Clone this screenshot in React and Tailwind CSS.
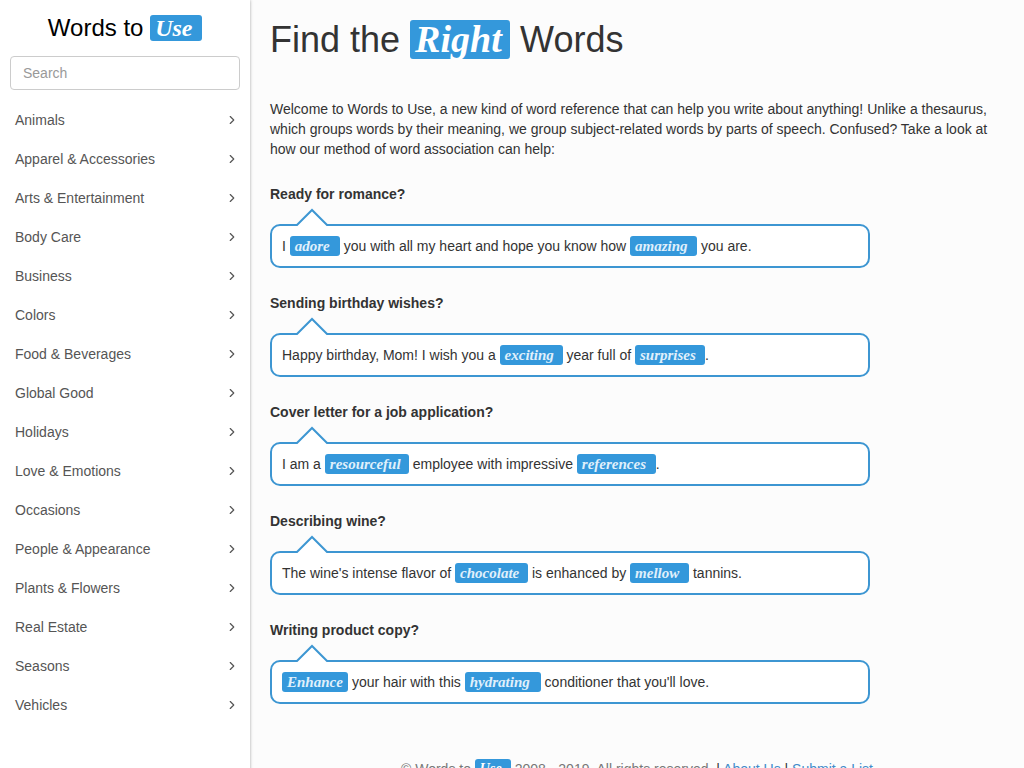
import { ChevronRight } from 'lucide-react'
import clsx from 'clsx'

const categories = [
  'Animals',
  'Apparel & Accessories',
  'Arts & Entertainment',
  'Body Care',
  'Business',
  'Colors',
  'Food & Beverages',
  'Global Good',
  'Holidays',
  'Love & Emotions',
  'Occasions',
  'People & Appearance',
  'Plants & Flowers',
  'Real Estate',
  'Seasons',
  'Vehicles',
]

// Strings are plain text, objects are highlighted words
const examples = [
  {
    title: 'Ready for romance?',
    parts: [
      'I ',
      { word: 'adore', width: 'w-[50px]' },
      ' you with all my heart and hope you know how ',
      { word: 'amazing', width: 'w-[67px]' },
      ' you are.',
    ],
  },
  {
    title: 'Sending birthday wishes?',
    parts: [
      'Happy birthday, Mom! I wish you a ',
      { word: 'exciting', width: 'w-[63px]' },
      ' year full of ',
      { word: 'surprises', width: 'w-[70px]' },
      '.',
    ],
  },
  {
    title: 'Cover letter for a job application?',
    parts: [
      'I am a ',
      { word: 'resourceful', width: 'w-[84px]' },
      ' employee with impressive ',
      { word: 'references', width: 'w-[79px]' },
      '.',
    ],
  },
  {
    title: 'Describing wine?',
    parts: [
      "The wine's intense flavor of ",
      { word: 'chocolate', width: 'w-[73px]' },
      ' is enhanced by ',
      { word: 'mellow', width: 'w-[59px]' },
      ' tannins.',
    ],
  },
  {
    title: 'Writing product copy?',
    parts: [
      { word: 'Enhance', width: 'w-[66px]' },
      ' your hair with this ',
      { word: 'hydrating', width: 'w-[76px]' },
      " conditioner that you'll love.",
    ],
  },
]

function Word({ className, children }) {
  return (
    <span
      className={clsx(
        "inline-block whitespace-nowrap rounded-[3px] bg-[#3498db] pl-[5px] text-left align-top font-['Liberation_Serif',serif] font-bold italic",
        className
      )}
    >
      {children}
    </span>
  )
}

function Example({ title, parts }) {
  return (
    <section className="mb-[25px]">
      <h2 className="mb-5 font-bold">{title}</h2>
      <div className="relative max-w-[600px] rounded-[10px] border-2 border-[#3d96d2] bg-white p-[10px]">
        {/* Bubble pointer */}
        <svg className="absolute -top-[18px] left-6" width="32" height="18" viewBox="0 0 32 18" aria-hidden="true">
          <path d="M0 18L16 2L32 18Z" fill="#fff" />
          <path d="M0 18L16 2L32 18" fill="none" stroke="#3d96d2" strokeWidth="2" />
        </svg>
        <p>
          {parts.map((part, i) =>
            typeof part === 'string' ? (
              part
            ) : (
              <Word key={i} className={clsx('h-5 text-[15px] leading-5 text-[#e0f0fb]', part.width)}>
                {part.word}
              </Word>
            )
          )}
        </p>
      </div>
    </section>
  )
}

function Sidebar() {
  return (
    <aside className="w-[250px] shrink-0 bg-white px-[10px] pt-[15px] shadow-[0_0_3px_rgba(0,0,0,0.35)]">
      <a href="#" className="block text-center text-2xl leading-[26px] text-black">
        Words to <Word className="h-[26px] w-[52px] text-white">Use</Word>
      </a>

      <input
        type="text"
        aria-label="Search"
        placeholder="Search"
        className="mt-[15px] block h-[34px] w-full rounded border border-[#ccc] bg-white px-3 placeholder:text-[#999]"
      />

      <nav className="mt-[10px]">
        <ul>
          {categories.map((name) => (
            <li key={name}>
              <a href="#" className="flex h-[39px] items-center justify-between pl-[5px] pr-px text-[#555]">
                {name}
                <ChevronRight size={14} />
              </a>
            </li>
          ))}
        </ul>
      </nav>
    </aside>
  )
}

export default function App() {
  return (
    <div className="flex min-h-screen bg-[#fcfcfc] font-['Liberation_Sans',Arial,sans-serif] text-sm leading-5 text-[#333]">
      <Sidebar />

      <main className="min-w-0 flex-1 px-5 pt-5">
        <h1 className="mb-[39px] text-4xl leading-10">
          Find the{' '}
          <Word className="h-[39px] w-[100px] text-[38px] leading-[39px] text-white">Right</Word>{' '}
          Words
        </h1>

        <p className="mb-[25px]">
          Welcome to Words to Use, a new kind of word reference that can help you write about anything! Unlike a
          thesaurus, which groups words by their meaning, we group subject-related words by parts of speech. Confused?
          Take a look at how our method of word association can help:
        </p>

        {examples.map((example) => (
          <Example key={example.title} {...example} />
        ))}

        <footer className="mt-[55px] text-center text-[#777]">
          © Words to <Word className="h-5 w-9 text-white">Use</Word> 2008 - 2019. All rights reserved.{' '}
          <span className="text-[#333]">|</span>{' '}
          <a href="#" className="text-[#428bca]">About Us</a>{' '}
          <span className="text-[#333]">|</span>{' '}
          <a href="#" className="text-[#428bca]">Submit a List</a>
        </footer>
      </main>
    </div>
  )
}
